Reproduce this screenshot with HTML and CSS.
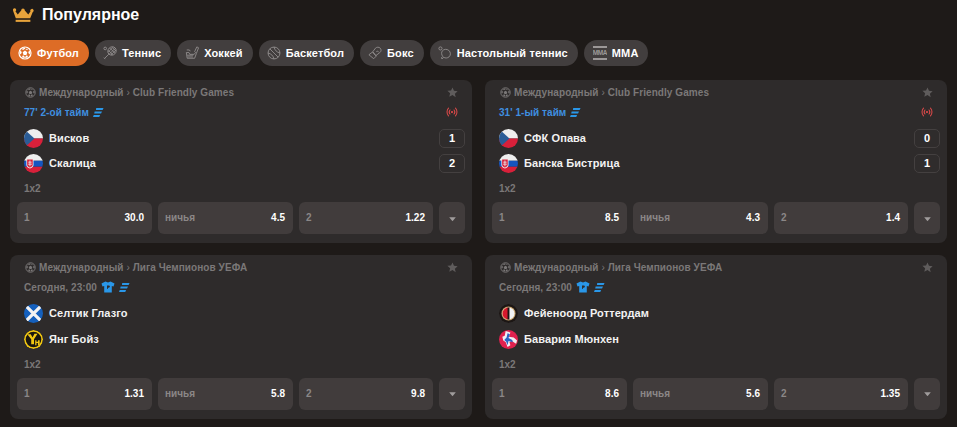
FILE: index.html
```html
<!DOCTYPE html>
<html lang="ru">
<head>
<meta charset="utf-8">
<title>Популярное</title>
<link rel="stylesheet" href="styles.css">
</head>
<body>
<svg class="defs" width="0" height="0" aria-hidden="true">
  <symbol id="ball" viewBox="0 0 20 20">
    <circle cx="10" cy="10" r="8.600" fill="none" stroke="currentColor" stroke-width="1.700"/>
    <path d="M10 6.600l3.300 2.400-1.300 3.900H8L6.700 9z" fill="currentColor"/>
    <path d="M10 2.200v1.900L7.400 5.600 5 4.200zM15 4.200l-2.400 1.400L10 4.100zM17.800 10l-1.800 2-1.400-3 1.800-3zM2.200 10l1.800 2 1.400-3-1.800-3zM6 16.600l.2-2.800 2.400-.3 1.400 3.500zM14 16.600l-.2-2.800-2.400-.3-1.400 3.500z" fill="currentColor"/>
  </symbol>
  <symbol id="racket" viewBox="0 0 16 16">
    <g fill="none" stroke="currentColor" stroke-width=".9">
      <ellipse cx="10.300" cy="5.700" rx="5" ry="4.600" transform="rotate(-45 10.300 5.700)"/>
      <path d="M6.600 9.400L1.800 14.200M2.700 15L1 13.300M8 2.500l5.500 5.500M6.300 5l4.700 4.700M10.500 1.500l4 4M7 9.500l6.500-6.500M6 7l5-5.200M9 10.300l5.500-5.500"/>
      <circle cx="2.500" cy="2.800" r="1.500"/>
    </g>
  </symbol>
  <symbol id="hockey" viewBox="0 0 16 16">
    <g fill="none" stroke="currentColor" stroke-width=".9" stroke-linejoin="round">
      <path d="M1.500 7.500h3l1 2h5l1.500-2-1-1 2.500-5.500 2 1-2.500 6.500-2 5.500H2.500z"/>
      <path d="M2 4.500h3l1 1.500M2.500 10.500h7M3 12.500h6"/>
    </g>
  </symbol>
  <symbol id="basket" viewBox="0 0 16 16">
    <g fill="none" stroke="currentColor" stroke-width=".9">
      <circle cx="8" cy="8" r="6.800"/>
      <path d="M3.200 3.200l9.600 9.600M8 1.200C9 5 11 7 14.800 8M1.200 8C5 9 7 11 8 14.800"/>
    </g>
  </symbol>
  <symbol id="glove" viewBox="0 0 16 16">
    <g fill="none" stroke="currentColor" stroke-width=".9" stroke-linejoin="round">
      <path d="M5.500 6.500l3-4c1.500-1.500 4-1.500 5.500 0 1.300 1.500 1.200 3.800-.5 5l-4.500 3.500z"/>
      <path d="M9.500 6.500c1-1 2.500-.5 2.500.5M5 7l4.500 4.500-3 3L1 10z"/>
    </g>
  </symbol>
  <symbol id="pong" viewBox="0 0 16 16">
    <g fill="none" stroke="currentColor" stroke-width=".9">
      <path d="M5 5.500C6.800 3.500 10 3.200 12.300 5c2.300 2 2.500 5.300.5 7.300-2 1.800-4.700 1.800-6.300.5L4.800 14.800 3.700 13.700 5.400 12C4 10 3.600 7.200 5 5.500z"/>
      <circle cx="2.800" cy="2.800" r="1.800"/>
    </g>
  </symbol>
  <symbol id="stream" viewBox="0 0 12 12">
    <path d="M3.500 1H11.500L10.500 3.200H3.200zM1.800 4.800H9.800L8.800 7H1.300zM.8 8.700H7.800L6.800 11H0z" fill="currentColor"/>
  </symbol>
  <symbol id="shirt" viewBox="0 0 14 12">
    <path d="M4.500 .5L7 1.500 9.500 .5 13.500 2.500 12.500 5.500 10.800 5V11.500H3.200V5L1.500 5.500 .5 2.500z" fill="currentColor"/>
    <path d="M6 4.500h1.800a1 1 0 0 1 0 2.200H6.800V8H6z" fill="#2e2b2b"/>
  </symbol>
  <symbol id="star" viewBox="0 0 12 12">
    <path d="M6 .5l1.600 3.700 4 .4-3 2.700.9 3.900L6 8.600 2.500 10.700l.9-3.900-3-2.700 4-.4z" fill="currentColor"/>
  </symbol>
  <symbol id="live" viewBox="0 0 13 10">
    <g fill="none" stroke="currentColor" stroke-width="1.100" stroke-linecap="round">
      <path d="M2.700 .8C.6 3 .6 7 2.700 9.200M10.300 .8C12.400 3 12.400 7 10.300 9.200M4.300 2.800C3.300 4 3.300 6 4.300 7.200M8.700 2.800C9.700 4 9.700 6 8.700 7.200"/>
    </g>
    <circle cx="6.500" cy="5" r="1.200" fill="currentColor"/>
  </symbol>
  <symbol id="cz" viewBox="0 0 20 20">
    <path d="M0 0h20v10H0z" fill="#eeeeee"/><path d="M0 10h20v10H0z" fill="#d8203a"/><path d="M0 0v20l11-10z" fill="#2a5c96"/>
  </symbol>
  <symbol id="sk" viewBox="0 0 20 20">
    <path d="M0 0h20v7H0z" fill="#eeeeee"/><path d="M0 7h20v6.500H0z" fill="#1555c0"/><path d="M0 13.500h20V20H0z" fill="#d8203a"/>
    <path d="M2.500 5h7.500v6.500c0 2-2 3-3.750 3.800C4.500 14.500 2.500 13.500 2.500 11.500z" fill="#eeeeee"/>
    <path d="M3.300 5.800h5.900v5.600c0 1.600-1.500 2.300-2.950 3-1.500-.7-2.950-1.400-2.950-3z" fill="#d8203a"/>
    <path d="M5.800 6.800h.9v1.400h1.400v.8H6.700v1.300h1.700v.8H6.700V13h-.9v-1.900H4.100v-.8h1.700V9H4.400v-.8h1.400z" fill="#eeeeee"/>
  </symbol>
  <symbol id="sct" viewBox="0 0 20 20">
    <rect width="20" height="20" fill="#1560bd"/>
    <path d="M2.500 2.500l15 15M17.500 2.500l-15 15" stroke="#f2f2f2" stroke-width="3.400" fill="none"/>
  </symbol>
  <symbol id="yb" viewBox="0 0 20 20">
    <circle cx="10" cy="10" r="10" fill="#f2c811"/>
    <circle cx="10" cy="10" r="8.200" fill="#1a1710"/>
    <path d="M3.500 4.500h3.600L9 8l2-4h3.200l-3.700 5.800V15H7.600v-5.200z" fill="#f2c811"/>
    <path d="M11.800 10.800h1.300v1.500h1.600v-1.500H16.500V16h-1.800v-2.400h-1.600V16h-1.300z" fill="#f2c811"/>
  </symbol>
  <symbol id="fey" viewBox="0 0 20 20">
    <circle cx="10" cy="10" r="10" fill="#1c1614"/>
    <circle cx="10" cy="10" r="7.400" fill="#c9a46a"/>
    <circle cx="10" cy="10" r="6.300" fill="#f2f2f2"/>
    <path d="M10 3.700a6.300 6.300 0 0 0 0 12.600z" fill="#d7192c"/>
    <path d="M9 3.700h2v12.600H9z" fill="#1c1614"/>
  </symbol>
  <symbol id="fcb" viewBox="0 0 20 20">
    <rect width="20" height="20" fill="#e0204e"/>
    <path d="M7 1l5 1.500L10.500 7l5 1 3.500 3-1 3.500-4.500-3-2.500 1 1 3.500-3 2L7 12.500 4.500 11l-1-4L6 6z" fill="#f0eef2"/>
    <path d="M9 3.500l2.500 1-1.500 4 4 2 .5 2.500-4.500-1.500-1 4.500L7.500 12l-2-1.500L8 8z" fill="#2a63c4"/>
  </symbol>
  <symbol id="crown" viewBox="0 0 23 16">
    <path d="M1 2.800a1.700 1.700 0 1 1 2.600 1.400L6 7.500l3.600-4.300a1.700 1.700 0 1 1 3.800 0L17 7.500l2.400-3.300a1.700 1.700 0 1 1 2.300.6L19 11.500H4L1.300 4z" fill="#e7a33b"/>
    <path d="M3.800 13h15.400v2.200H3.800z" fill="#e7a33b"/>
  </symbol>
  <symbol id="caret" viewBox="0 0 8 5">
    <path d="M.2 .3h7.600L4 4.700z" fill="currentColor"/>
  </symbol>
</svg>

<main class="page">
  <header class="title-row">
    <svg class="crown"><use href="#crown"/></svg>
    <h1 class="title">Популярное</h1>
  </header>

  <nav class="tabs">
    <a class="tab tab-active"><svg class="tab-icon"><use href="#ball"/></svg>Футбол</a>
    <a class="tab"><svg class="tab-icon"><use href="#racket"/></svg>Теннис</a>
    <a class="tab"><svg class="tab-icon"><use href="#hockey"/></svg>Хоккей</a>
    <a class="tab"><svg class="tab-icon"><use href="#basket"/></svg>Баскетбол</a>
    <a class="tab"><svg class="tab-icon"><use href="#glove"/></svg>Бокс</a>
    <a class="tab"><svg class="tab-icon"><use href="#pong"/></svg>Настольный теннис</a>
    <a class="tab"><span class="mma-icon">MMA</span>MMA</a>
  </nav>

  <section class="grid">
    <article class="card">
      <div class="card-head">
        <svg class="league-icon"><use href="#ball"/></svg>
        <span class="league">Международный <i class="sep">›</i> Club Friendly Games</span>
        <svg class="star"><use href="#star"/></svg>
      </div>
      <div class="status-row">
        <span class="status-live">77' 2-ой тайм</span>
        <svg class="stream"><use href="#stream"/></svg>
        <svg class="live"><use href="#live"/></svg>
      </div>
      <div class="teams">
        <div class="team"><svg class="flag"><use href="#cz"/></svg><span class="team-name">Висков</span><span class="score">1</span></div>
        <div class="team"><svg class="flag"><use href="#sk"/></svg><span class="team-name">Скалица</span><span class="score">2</span></div>
      </div>
      <div class="market">1x2</div>
      <div class="odds">
        <div class="odd"><span class="odd-label">1</span><span class="odd-value">30.0</span></div>
        <div class="odd"><span class="odd-label">ничья</span><span class="odd-value">4.5</span></div>
        <div class="odd"><span class="odd-label">2</span><span class="odd-value">1.22</span></div>
        <div class="more"><svg class="caret"><use href="#caret"/></svg></div>
      </div>
    </article>

    <article class="card">
      <div class="card-head">
        <svg class="league-icon"><use href="#ball"/></svg>
        <span class="league">Международный <i class="sep">›</i> Club Friendly Games</span>
        <svg class="star"><use href="#star"/></svg>
      </div>
      <div class="status-row">
        <span class="status-live">31' 1-ый тайм</span>
        <svg class="stream"><use href="#stream"/></svg>
        <svg class="live"><use href="#live"/></svg>
      </div>
      <div class="teams">
        <div class="team"><svg class="flag"><use href="#cz"/></svg><span class="team-name">СФК Опава</span><span class="score">0</span></div>
        <div class="team"><svg class="flag"><use href="#sk"/></svg><span class="team-name">Банска Бистрица</span><span class="score">1</span></div>
      </div>
      <div class="market">1x2</div>
      <div class="odds">
        <div class="odd"><span class="odd-label">1</span><span class="odd-value">8.5</span></div>
        <div class="odd"><span class="odd-label">ничья</span><span class="odd-value">4.3</span></div>
        <div class="odd"><span class="odd-label">2</span><span class="odd-value">1.4</span></div>
        <div class="more"><svg class="caret"><use href="#caret"/></svg></div>
      </div>
    </article>

    <article class="card">
      <div class="card-head">
        <svg class="league-icon"><use href="#ball"/></svg>
        <span class="league">Международный <i class="sep">›</i> Лига Чемпионов УЕФА</span>
        <svg class="star"><use href="#star"/></svg>
      </div>
      <div class="status-row">
        <span class="status-time">Сегодня, 23:00</span>
        <svg class="shirt"><use href="#shirt"/></svg>
        <svg class="stream"><use href="#stream"/></svg>
      </div>
      <div class="teams">
        <div class="team"><svg class="flag"><use href="#sct"/></svg><span class="team-name">Селтик Глазго</span></div>
        <div class="team"><svg class="flag"><use href="#yb"/></svg><span class="team-name">Янг Бойз</span></div>
      </div>
      <div class="market">1x2</div>
      <div class="odds">
        <div class="odd"><span class="odd-label">1</span><span class="odd-value">1.31</span></div>
        <div class="odd"><span class="odd-label">ничья</span><span class="odd-value">5.8</span></div>
        <div class="odd"><span class="odd-label">2</span><span class="odd-value">9.8</span></div>
        <div class="more"><svg class="caret"><use href="#caret"/></svg></div>
      </div>
    </article>

    <article class="card">
      <div class="card-head">
        <svg class="league-icon"><use href="#ball"/></svg>
        <span class="league">Международный <i class="sep">›</i> Лига Чемпионов УЕФА</span>
        <svg class="star"><use href="#star"/></svg>
      </div>
      <div class="status-row">
        <span class="status-time">Сегодня, 23:00</span>
        <svg class="shirt"><use href="#shirt"/></svg>
        <svg class="stream"><use href="#stream"/></svg>
      </div>
      <div class="teams">
        <div class="team"><svg class="flag"><use href="#fey"/></svg><span class="team-name">Фейеноорд Роттердам</span></div>
        <div class="team"><svg class="flag"><use href="#fcb"/></svg><span class="team-name">Бавария Мюнхен</span></div>
      </div>
      <div class="market">1x2</div>
      <div class="odds">
        <div class="odd"><span class="odd-label">1</span><span class="odd-value">8.6</span></div>
        <div class="odd"><span class="odd-label">ничья</span><span class="odd-value">5.6</span></div>
        <div class="odd"><span class="odd-label">2</span><span class="odd-value">1.35</span></div>
        <div class="more"><svg class="caret"><use href="#caret"/></svg></div>
      </div>
    </article>
  </section>
</main>
</body>
</html>
```

FILE: styles.css
```css
* { box-sizing: border-box; }

html, body {
  margin: 0;
  background: #1e1a18;
}

body {
  font-family: "Liberation Sans", Arial, sans-serif;
  font-weight: 700;
  color: #fff;
  overflow: hidden;
}

.defs { position: absolute; }

.page {
  padding: 4px 10px 0;
}

.title-row {
  display: flex;
  align-items: center;
  height: 21px;
  padding-left: 2px;
  gap: 8px;
}

.crown {
  width: 22px;
  height: 16px;
  margin-top: 1px;
}

.title {
  margin: 0;
  font-size: 16px;
  line-height: 21px;
  font-weight: 700;
}

.tabs {
  display: flex;
  gap: 6px;
  margin-top: 15px;
}

.tab {
  display: flex;
  align-items: center;
  gap: 5px;
  height: 26px;
  padding: 0 10px 0 8px;
  border-radius: 13px;
  background: #423e3e;
  font-size: 11px;
  letter-spacing: .12px;
  color: #fff;
  white-space: nowrap;
}

.tab-active {
  background: #dd6c26;
}

.tab-icon {
  width: 14px;
  height: 14px;
  color: #9c9898;
  flex: none;
}

.tab-active .tab-icon {
  color: #fff;
}

.mma-icon {
  display: block;
  width: 14px;
  margin-left: 1px;
  border-top: 2px solid #9c9898;
  border-bottom: 2px solid #9c9898;
  font-size: 6.500px;
  letter-spacing: -.5px;
  line-height: 10px;
  color: #9c9898;
  text-align: center;
  overflow: hidden;
}

.grid {
  display: grid;
  grid-template-columns: 462px 462px;
  column-gap: 13px;
  row-gap: 12px;
  margin-top: 14px;
}

.card {
  height: 163.400px;
  padding: 6px 7px 0;
  border-radius: 8px;
  background: #2e2b2b;
}

.card-head,
.status-row {
  display: flex;
  align-items: center;
  height: 12px;
  padding: 0 7px;
}

.league-icon {
  width: 11px;
  height: 11px;
  margin: 0 4px 0 1px;
  color: #7b7878;
  flex: none;
}

.league {
  margin-left: -1px;
  font-size: 10px;
  letter-spacing: .07px;
  color: #7b7878;
  flex: 1;
  white-space: nowrap;
}

.sep {
  font-style: normal;
  font-weight: 400;
}

.star {
  width: 11px;
  height: 11px;
  color: #5f5c5c;
}

.status-row {
  margin-top: 8px;
  gap: 4px;
}

.status-live {
  font-size: 10px;
  letter-spacing: .05px;
  color: #3f8fe0;
}

.status-time {
  font-size: 10px;
  letter-spacing: .05px;
  color: #7b7878;
}

.stream {
  width: 11px;
  height: 11px;
  color: #2a97e8;
}

.shirt {
  width: 14px;
  height: 12px;
  color: #2a97e8;
}

.live {
  width: 12px;
  height: 10px;
  margin-left: auto;
  color: #e04a4a;
}

.teams {
  display: flex;
  flex-direction: column;
  gap: 6.250px;
  margin-top: 11px;
  padding-left: 7px;
}

.team {
  display: flex;
  align-items: center;
  height: 19px;
}

.flag {
  width: 19px;
  height: 19px;
  border-radius: 50%;
  flex: none;
}

.team-name {
  margin-left: 6px;
  padding-bottom: 1px;
  font-size: 11px;
  letter-spacing: .1px;
  color: #f2f2f2;
  flex: 1;
}

.score {
  width: 26px;
  height: 19px;
  border: 1px solid #444040;
  border-radius: 5px;
  background: #2f2c2c;
  font-size: 11px;
  line-height: 16px;
  text-align: center;
}

.market {
  height: 12px;
  margin-top: 10px;
  padding-left: 7px;
  font-size: 10px;
  line-height: 12px;
  color: #7b7878;
}

.odds {
  display: grid;
  grid-template-columns: 135px 135px 134px 26px;
  gap: 6px;
  margin-top: 7px;
}

.odd {
  display: flex;
  align-items: center;
  justify-content: space-between;
  height: 32px;
  padding: 0 8px 1px 7px;
  border-radius: 6px;
  background: #413c3c;
}

.odd-label {
  font-size: 10px;
  color: #8b8787;
}

.odd-value {
  font-size: 10px;
  color: #fff;
}

.more {
  display: flex;
  align-items: center;
  justify-content: center;
  height: 32px;
  border-radius: 6px;
  background: #413c3c;
  color: #a09c9c;
}

.caret {
  width: 7px;
  height: 4.500px;
  margin-top: 2px;
}
```
